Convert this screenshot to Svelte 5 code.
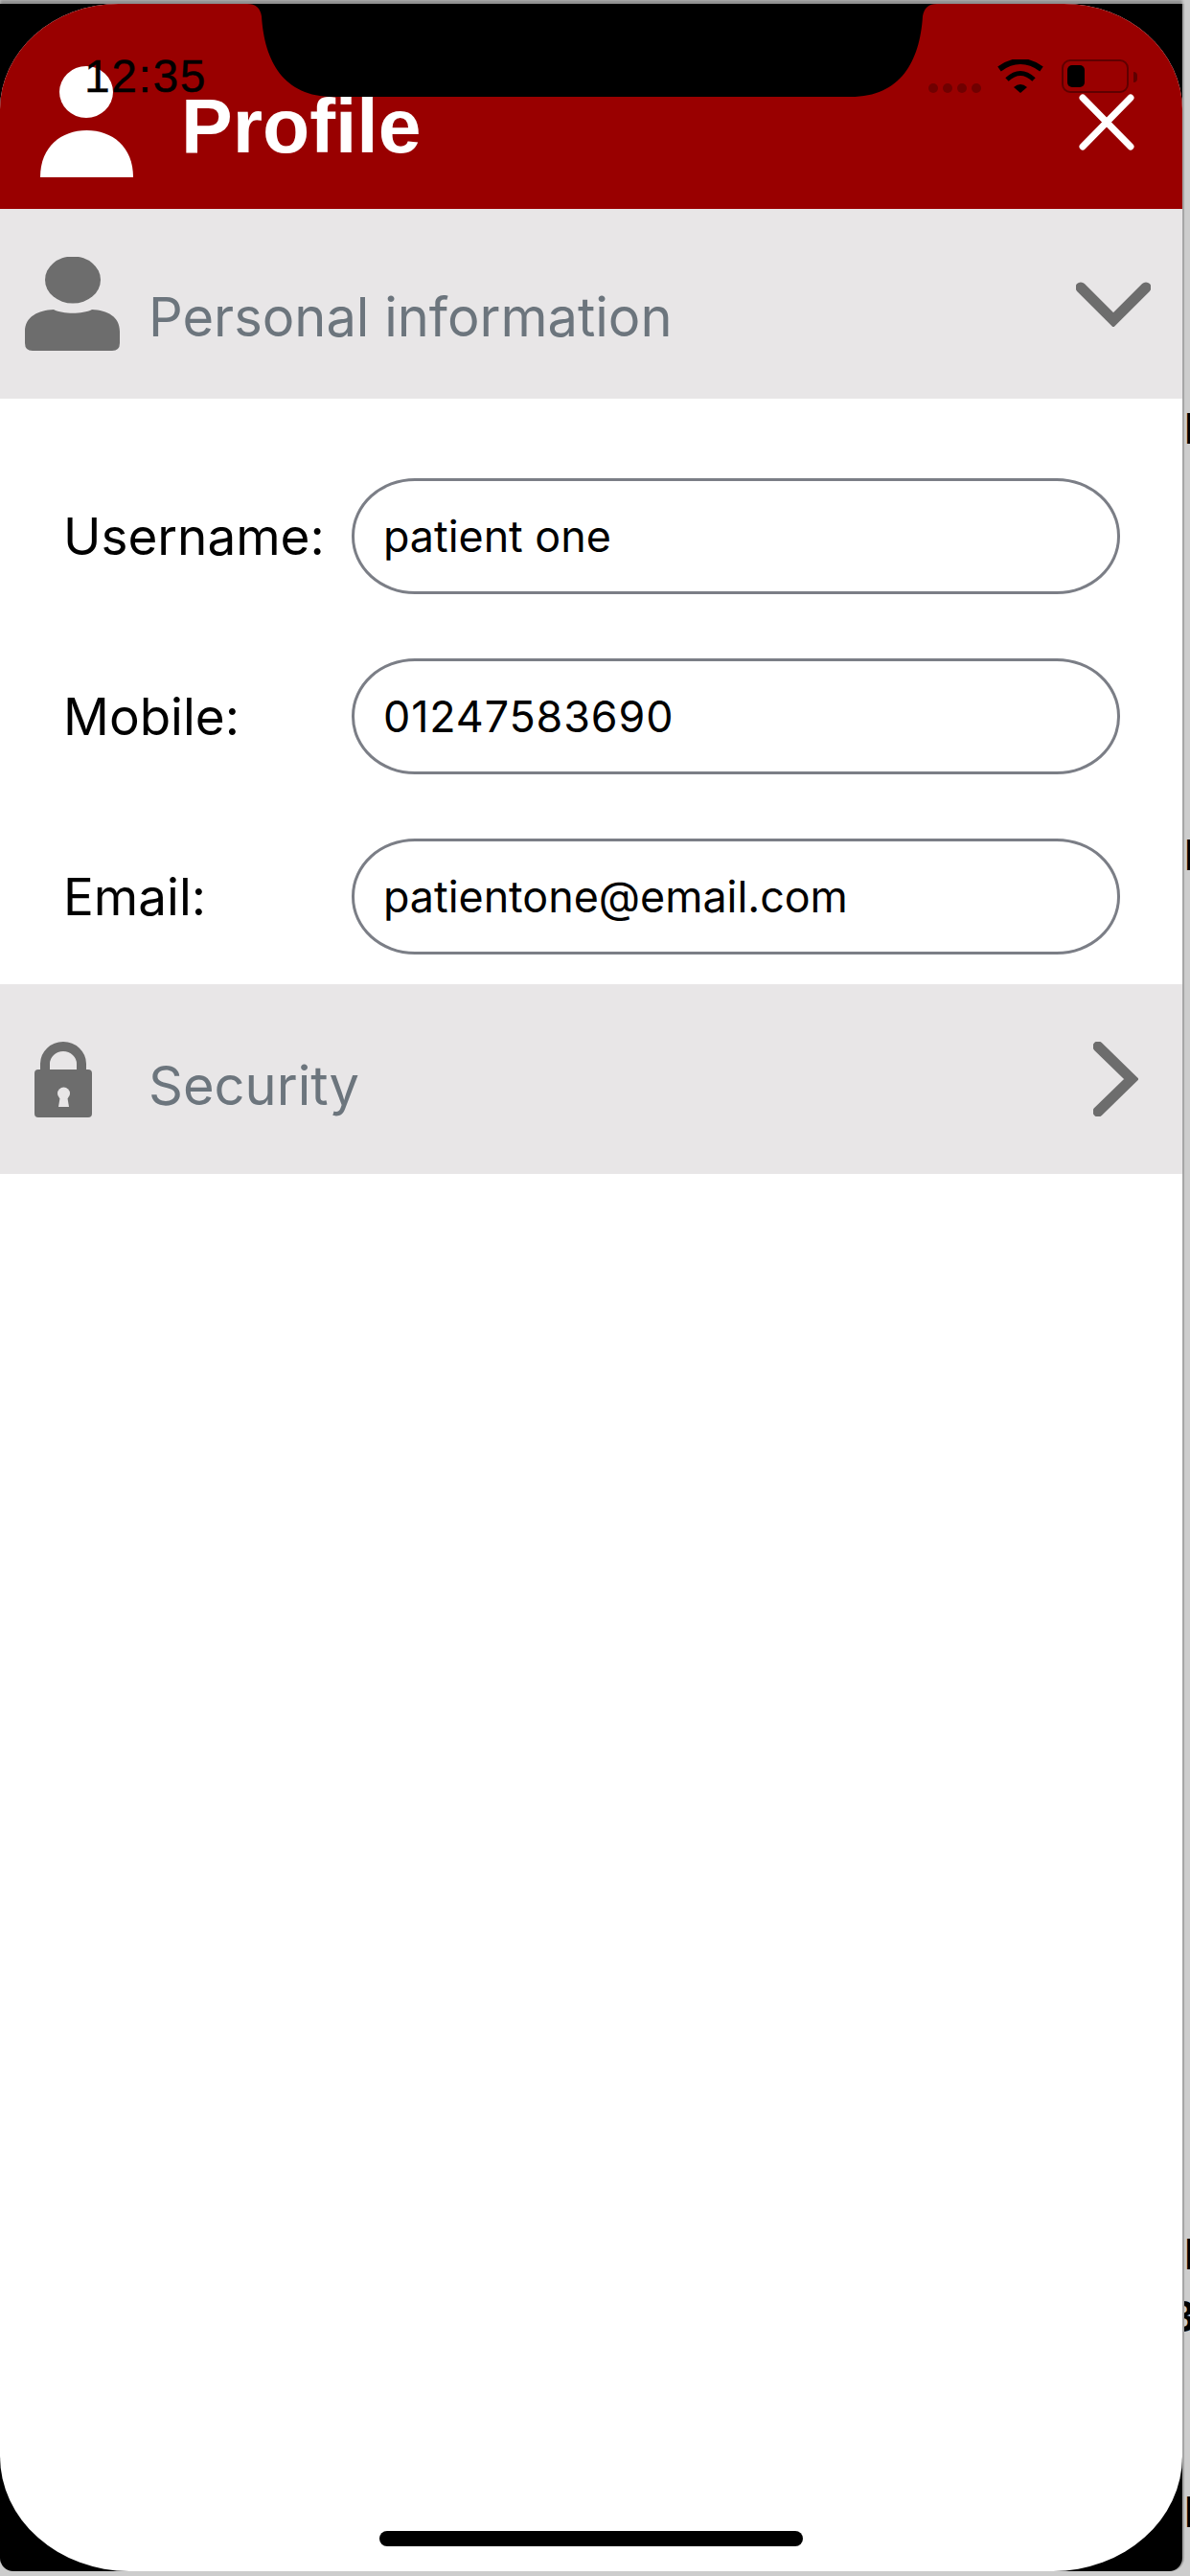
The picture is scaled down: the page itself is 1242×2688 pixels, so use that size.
<script>
	const fields = [
		{ label: 'Username:', value: 'patient one' },
		{ label: 'Mobile:', value: '01247583690', tel: true },
		{ label: 'Email:', value: 'patientone@email.com' }
	];
</script>

<!-- page behind the modal, only its cut-off letters show -->
<div class="behind-right">
	<span class="frag f1">N</span>
	<span class="frag f2">N</span>
	<span class="frag f3">H</span>
	<span class="frag f4">3</span>
	<span class="frag f5">N</span>
</div>
<div class="behind-bottom">PATIENT</div>

<div class="phone">
	<div class="screen">
		<svg class="notch" viewBox="0 0 1234 100" aria-hidden="true">
			<path d="M258 0Q271 0 273 13C276 60 296 97 348 97L888 97C940 97 960 60 963 13Q965 0 978 0Z" fill="#000" />
		</svg>

		<header class="top">
			<svg class="top-user" viewBox="0 0 97 117" aria-hidden="true">
				<ellipse cx="48" cy="28" rx="28" ry="27" fill="#fff" />
				<path d="M0 117C0 85 22 68 48.5 68C75 68 97 85 97 117Z" fill="#fff" />
			</svg>
			<h1>Profile</h1>
			<svg class="close" viewBox="0 0 58 59" aria-hidden="true">
				<path d="M4 4L54 55M54 4L4 55" stroke="#fff" stroke-width="7" stroke-linecap="round" fill="none" />
			</svg>
		</header>

		<div class="status">
			<span class="time">12:35</span>
			<span class="dots"><i></i><i></i><i></i><i></i></span>
			<svg class="wifi" viewBox="0 0 48 35" aria-hidden="true">
				<path d="M2 10Q24 -6 46 10" stroke="#000" stroke-width="6" fill="none" />
				<path d="M10 21Q24 8 38 21" stroke="#000" stroke-width="5" fill="none" />
				<path d="M17 29Q24 23 31 29L24 35Z" fill="#000" />
			</svg>
			<span class="battery"><b></b></span>
			<span class="nub"></span>
		</div>

		<section class="sec-head">
			<span class="sec-ico">
				<svg class="sec-user" viewBox="0 0 99 98" aria-hidden="true">
					<ellipse cx="50" cy="24" rx="29" ry="24.5" fill="#6d6d6d" />
					<path d="M0 78C0 62 14 56 30 55C40 60 60 60 70 55C86 56 99 62 99 78L99 90Q99 98 91 98L8 98Q0 98 0 90Z" fill="#6d6d6d" />
				</svg>
			</span>
			<span class="sec-title first">Personal information</span>
			<svg class="chev-down" viewBox="0 0 78 47" aria-hidden="true">
				<path d="M5 6L39 40L73 6" stroke="#6d6d6d" stroke-width="11" stroke-linecap="round" fill="none" />
			</svg>
		</section>

		<div class="form">
			{#each fields as f}
				<div class="row">
					<span class="label">{f.label}</span>
					<div class="field" class:tel={f.tel}>{f.value}</div>
				</div>
			{/each}
		</div>

		<section class="sec-head">
			<span class="sec-ico">
				<svg class="sec-lock" viewBox="0 0 60 79" aria-hidden="true">
					<path d="M11 31V23A19 18 0 0 1 49 23V31" stroke="#6d6d6d" stroke-width="10" fill="none" />
					<rect y="29" width="60" height="50" rx="4" fill="#6d6d6d" />
					<circle cx="30.5" cy="54" r="6.5" fill="#e8e6e7" />
					<path d="M27 56H34L36 68H25Z" fill="#e8e6e7" />
				</svg>
			</span>
			<span class="sec-title">Security</span>
			<svg class="chev-right" viewBox="0 0 47 78" aria-hidden="true">
				<path d="M5 5L40 39L5 73" stroke="#6d6d6d" stroke-width="11" stroke-linecap="round" fill="none" />
			</svg>
		</section>

		<div class="home"></div>
	</div>
</div>

<style>
	:global(html),
	:global(body) {
		margin: 0;
		height: 2688px;
		overflow: hidden;
		background: #cdcdcd;
	}
	.phone {
		position: relative;
		width: 1234px;
		height: 2679px;
		margin-top: 4px;
		background: #000;
		border-radius: 0 0 14px 14px;
		box-shadow: 2px 0 0 #a6a6a6, 0 -4px 3px #8e8e8e;
	}
	.screen {
		position: relative;
		display: flex;
		flex-direction: column;
		height: 100%;
		background: #fff;
		overflow: hidden;
		border-radius: 124px 124px 135px 135px / 110px 110px 120px 120px;
		font-family: Inter, 'Liberation Sans', sans-serif;
	}
	.notch {
		position: absolute;
		top: 0;
		left: 0;
		width: 1234px;
		height: 100px;
		z-index: 1;
	}
	.top {
		display: flex;
		align-items: flex-start;
		flex: none;
		height: 214px;
		background: #990000;
		box-sizing: border-box;
		padding: 64px 50px 0 42px;
	}
	.top-user {
		position: relative;
		width: 97px;
		height: 117px;
		flex: none;
	}
	h1 {
		position: relative;
		z-index: 2;
		margin: 17px 0 0 50px;
		font: 700 80.5px/1.15 'Liberation Sans', Arial, sans-serif;
		color: #fff;
	}
	.close {
		width: 58px;
		height: 59px;
		margin: 30px 0 0 auto;
		flex: none;
	}
	.status {
		position: absolute;
		top: 0;
		left: 0;
		right: 0;
		display: flex;
		align-items: flex-start;
		padding: 49px 47px 0 88px;
		z-index: 3;
	}
	.time {
		font: 400 48px/54px 'Liberation Sans', Arial, sans-serif;
		letter-spacing: 1.6px;
		color: #000;
		-webkit-text-stroke: 0.4px #000;
	}
	.dots {
		display: flex;
		gap: 5px;
		margin: 34px 0 0 auto;
	}
	.dots i {
		width: 10px;
		height: 10px;
		border-radius: 50%;
		background: #700000;
	}
	.wifi {
		width: 48px;
		height: 35px;
		margin: 9px 0 0 17px;
	}
	.battery {
		display: block;
		box-sizing: border-box;
		width: 70px;
		height: 35px;
		margin: 9px 0 0 19px;
		padding: 4px;
		border: 2.5px solid #5f0000;
		border-radius: 9px;
	}
	.battery b {
		display: block;
		width: 18px;
		height: 100%;
		background: #000;
		border-radius: 5px;
	}
	.nub {
		display: block;
		width: 4px;
		height: 11px;
		margin: 22px 0 0 5px;
		background: #5f0000;
		border-radius: 0 6px 6px 0;
	}
	.sec-head {
		display: flex;
		align-items: center;
		flex: none;
		height: 198px;
		background: #e8e6e7;
	}
	.sec-ico {
		display: flex;
		flex: none;
		width: 155px;
	}
	.sec-user {
		width: 99px;
		height: 98px;
		margin-left: 26px;
	}
	.sec-lock {
		width: 60px;
		height: 79px;
		margin-left: 36px;
	}
	.sec-title {
		margin-top: 15px;
		font-size: 56px;
		line-height: 1.2;
		color: #6c757d;
	}
	.sec-title.first {
		margin-top: 29px;
	}
	.chev-down {
		width: 78px;
		height: 47px;
		margin: 0 33px 0 auto;
	}
	.chev-right {
		width: 47px;
		height: 78px;
		margin: 0 46px 0 auto;
	}
	.form {
		display: flex;
		flex-direction: column;
		flex: none;
		gap: 67px;
		height: 611px;
		box-sizing: border-box;
		padding: 83px 0 0 66px;
	}
	.row {
		display: grid;
		grid-template-columns: 301px 802px;
		align-items: center;
	}
	.label {
		margin-top: 3px;
		font-size: 53px;
		line-height: 1.2;
		color: #000;
	}
	.field {
		box-sizing: border-box;
		height: 121px;
		padding-left: 30px;
		border: 3px solid #7b7e86;
		border-radius: 66px / 60px;
		font-size: 44.8px;
		line-height: 117px;
		color: #000;
	}
	.field.tel {
		letter-spacing: 0.9px;
	}
	.home {
		flex: none;
		width: 442px;
		height: 16px;
		margin: auto auto 26px;
		border-radius: 8px;
		background: #000;
	}
	.behind-right {
		position: absolute;
		top: 0;
		left: 1236px;
		width: 6px;
		height: 2688px;
		overflow: hidden;
	}
	.frag {
		position: absolute;
		left: 0;
		font: 700 46px/1 'Liberation Sans', Arial, sans-serif;
		color: #000;
	}
	.f1 { top: 424px; }
	.f2 { top: 869px; }
	.f3 { top: 2329px; }
	.f4 { top: 2394px; margin-left: -14px; }
	.f5 { top: 2598px; }
	.behind-bottom {
		position: absolute;
		top: 2685px;
		left: 557px;
		height: 3px;
		overflow: hidden;
		font: 700 46px/42px 'Liberation Sans', Arial, sans-serif;
		letter-spacing: 2px;
		color: #000;
	}
</style>
